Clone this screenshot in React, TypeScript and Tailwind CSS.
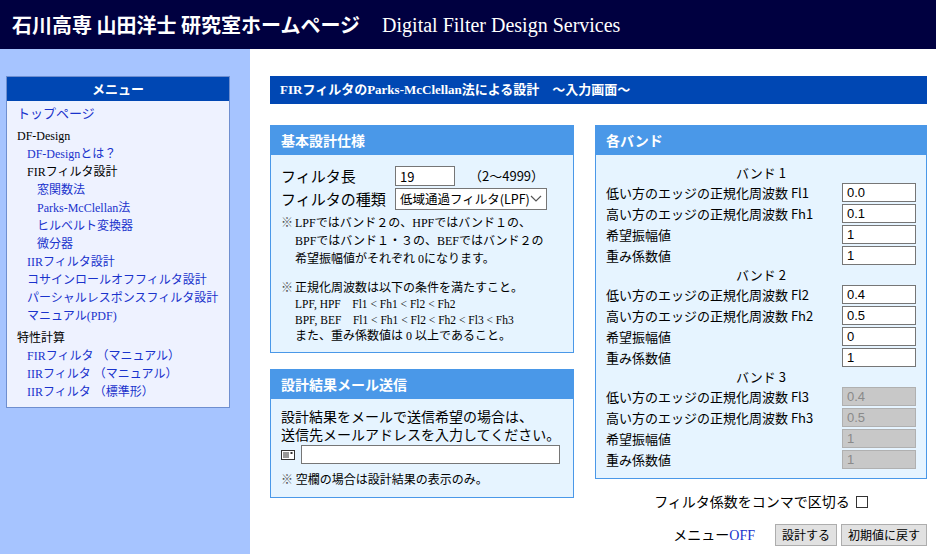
import React from 'react'

const serif = { fontFamily: '"Liberation Serif", "Noto Sans CJK JP", serif' }
const cjk = { fontFamily: '"Noto Sans CJK JP", sans-serif' }

const Field = ({ label, value, disabled }: { label: string; value: string; disabled?: boolean }) => (
  <div className="flex items-center justify-between h-[21px]">
    <span className="whitespace-nowrap">{label}</span>
    <input
      readOnly
      value={value}
      className={`w-[74px] h-[19px] border px-1 text-[13px] outline-none ${disabled ? 'bg-[#c8c8c8] text-[#8a8a8a] border-[#b0b0b0]' : 'bg-white border-[#767676]'}`}
      style={{ fontFamily: '"Liberation Sans", sans-serif' }}
    />
  </div>
)

const Band = ({ n, vals, disabled }: { n: number; vals: string[]; disabled?: boolean }) => (
  <div>
    <div className="text-center h-[18px] leading-[18px]">バンド {n}</div>
    <Field label={`低い方のエッジの正規化周波数 Fl${n}`} value={vals[0]} disabled={disabled} />
    <Field label={`高い方のエッジの正規化周波数 Fh${n}`} value={vals[1]} disabled={disabled} />
    <Field label="希望振幅値" value={vals[2]} disabled={disabled} />
    <Field label="重み係数値" value={vals[3]} disabled={disabled} />
  </div>
)

const Panel = ({ title, children, className }: { title: string; children: React.ReactNode; className?: string }) => (
  <div className={`border border-[#4a98e8] bg-[#e6f4ff] ${className ?? ''}`}>
    <div className="bg-[#4a98e8] text-white font-bold text-[14px] h-[29px] leading-[29px] px-[10px]" style={cjk}>
      {title}
    </div>
    {children}
  </div>
)

const App = () => {
  return (
    <div className="w-[936px] h-[554px] overflow-hidden flex flex-col text-[14px] text-black" style={serif}>
      <div className="h-[49px] bg-[#000040] flex items-center px-[12px] gap-[22px] text-white shrink-0">
        <span className="text-[20px] font-bold" style={cjk}>石川高専 山田洋士 研究室ホームページ</span>
        <span className="text-[20px]">Digital Filter Design Services</span>
      </div>
      <div className="flex flex-1">
        <div className="w-[250px] bg-[#a6c4ff] pt-[27px] pl-[6px] shrink-0">
          <div className="w-[224px] border border-[#6f8fd0] bg-[#eef2ff] pb-[6px]">
            <div className="bg-[#0047b3] text-white text-center text-[13px] font-bold h-[24px] leading-[24px]" style={cjk}>メニュー</div>
            <div className="px-[10px] pt-[2px] text-[12px] leading-[18px] whitespace-nowrap" style={serif}>
              <div className="text-[#1a33cc] text-[13px] leading-[22px]">トップページ</div>
              <div className="mt-[2px]">DF-Design</div>
              <div className="pl-[10px] text-[#1a33cc]">
                <div>DF-Designとは？</div>
                <div className="text-black">FIRフィルタ設計</div>
                <div className="pl-[10px]">
                  <div>窓関数法</div>
                  <div>Parks-McClellan法</div>
                  <div>ヒルベルト変換器</div>
                  <div>微分器</div>
                </div>
                <div>IIRフィルタ設計</div>
                <div>コサインロールオフフィルタ設計</div>
                <div>パーシャルレスポンスフィルタ設計</div>
                <div>マニュアル(PDF)</div>
              </div>
              <div className="mt-[4px]">特性計算</div>
              <div className="pl-[10px] text-[#1a33cc]">
                <div>FIRフィルタ （マニュアル）</div>
                <div>IIRフィルタ （マニュアル）</div>
                <div>IIRフィルタ （標準形）</div>
              </div>
            </div>
          </div>
        </div>
        <div className="flex-1 bg-white pl-[20px] pr-[10px] pt-[27px]">
          <div className="bg-[#0047b3] text-white font-bold text-[13px] h-[28px] leading-[28px] px-[10px]">
            FIRフィルタのParks-McClellan法による設計　～入力画面～
          </div>
          <div className="flex gap-[21px] mt-[21px]">
            <div className="w-[304px] flex flex-col gap-[16px]">
              <Panel title="基本設計仕様">
                <div className="px-[10px] pt-[10px] pb-[8px]">
                  <div className="flex items-center h-[22px]" style={cjk}>
                    <span className="w-[114px] text-[15px]">フィルタ長</span>
                    <input readOnly value="19" className="w-[60px] h-[20px] bg-white border border-[#767676] px-1 text-[13px]" />
                    <span className="ml-[14px] text-[13px]">（2～4999）</span>
                  </div>
                  <div className="flex items-center h-[24px]" style={cjk}>
                    <span className="w-[114px] text-[15px]">フィルタの種類</span>
                    <div className="w-[152px] h-[22px] bg-white border border-[#767676] flex items-center justify-between px-[4px] text-[12.5px] whitespace-nowrap">
                      <span>低域通過フィルタ(LPF)</span>
                      <svg width="12" height="8" viewBox="0 0 12 8"><path d="M1 1l5 5 5-5" fill="none" stroke="#555" strokeWidth="1.2" /></svg>
                    </div>
                  </div>
                  <div className="mt-[3px] text-[12px] leading-[18px] flex">
                    <span className="w-[14px] text-[#555]">※</span>
                    <div>LPFではバンド２の、HPFではバンド１の、<br />BPFではバンド１・３の、BEFではバンド２の<br />希望振幅値がそれぞれ 0になります。</div>
                  </div>
                  <div className="mt-[12px] text-[12px] leading-[16px] flex">
                    <span className="w-[14px] text-[#555]">※</span>
                    <div>
                      <div>正規化周波数は以下の条件を満たすこと。</div>
                      <div className="text-[11.5px]">LPF, HPF　Fl1 &lt; Fh1 &lt; Fl2 &lt; Fh2</div>
                      <div className="text-[11.5px]">BPF, BEF　Fl1 &lt; Fh1 &lt; Fl2 &lt; Fh2 &lt; Fl3 &lt; Fh3</div>
                      <div>また、重み係数値は 0 以上であること。</div>
                    </div>
                  </div>
                </div>
              </Panel>
              <Panel title="設計結果メール送信" className="h-[129px]">
                <div className="px-[10px] pt-[8px] text-[14px] leading-[18px]" style={cjk}>
                  <div>設計結果をメールで送信希望の場合は、</div>
                  <div>送信先メールアドレスを入力してください。</div>
                  <div className="flex items-center gap-[6px] mt-[2px]">
                    <svg width="14" height="10" viewBox="0 0 14 10"><rect x="0.5" y="0.5" width="13" height="9" fill="white" stroke="#333" /><path d="M2 3h6M2 5h6M2 7h6" stroke="#333" /><rect x="9.5" y="2" width="2" height="2" fill="#333" /></svg>
                    <div className="w-[259px] h-[19px] bg-white border border-[#767676]" />
                  </div>
                  <div className="mt-[6px] text-[12px]"><span className="text-[#555]">※</span> 空欄の場合は設計結果の表示のみ。</div>
                </div>
              </Panel>
            </div>
            <div className="w-[332px]">
              <Panel title="各バンド">
                <div className="px-[10px] pt-[9px] pb-[8px] text-[13px]" style={cjk}>
                  <Band n={1} vals={['0.0', '0.1', '1', '1']} />
                  <Band n={2} vals={['0.4', '0.5', '0', '1']} />
                  <Band n={3} vals={['0.4', '0.5', '1', '1']} disabled />
                </div>
              </Panel>
              <div className="flex justify-center items-center gap-[6px] mt-[12px] text-[14px]" style={cjk}>
                <span>フィルタ係数をコンマで区切る</span>
                <span className="w-[12px] h-[12px] border border-[#333] bg-white inline-block" />
              </div>
              <div className="flex justify-end items-center gap-[4px] mt-[12px] text-[13px]" style={cjk}>
                <span className="mr-[16px] text-[14px]">メニュー<span className="text-[#1a33cc]" style={serif}>OFF</span></span>
                <button className="h-[22px] px-[6px] bg-[#e1e1e1] border border-[#adadad] text-[12px]">設計する</button>
                <button className="h-[22px] px-[6px] bg-[#e1e1e1] border border-[#adadad] text-[12px]">初期値に戻す</button>
              </div>
            </div>
          </div>
        </div>
      </div>
    </div>
  )
}

export default App
